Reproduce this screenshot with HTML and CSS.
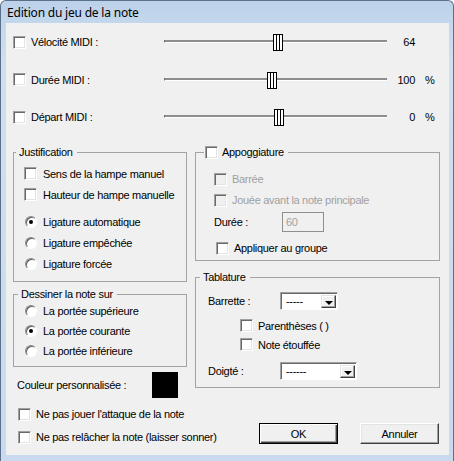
FILE: index.html
```html
<!DOCTYPE html>
<html>
<head>
  <title>Edition du jeu de la note</title>
  <meta charset="UTF-8">
  <link rel="stylesheet" href="styles.css">
</head>
<body>
  <div class="window">
    <div class="titlebar">Edition du jeu de la note</div>
    <div class="client">

      <div class="midi-rows">
        <div class="midi-row">
          <span class="check"></span>
          <span class="midi-label">Vélocité MIDI :</span>
          <div class="slider"><div class="track"></div><div class="thumb" style="left: 109px;"></div></div>
          <span class="midi-value">64</span>
          <span class="midi-unit"></span>
        </div>
        <div class="midi-row">
          <span class="check"></span>
          <span class="midi-label">Durée MIDI :</span>
          <div class="slider"><div class="track"></div><div class="thumb" style="left: 103px;"></div></div>
          <span class="midi-value">100</span>
          <span class="midi-unit">%</span>
        </div>
        <div class="midi-row">
          <span class="check"></span>
          <span class="midi-label">Départ MIDI :</span>
          <div class="slider"><div class="track"></div><div class="thumb" style="left: 110px;"></div></div>
          <span class="midi-value">0</span>
          <span class="midi-unit">%</span>
        </div>
      </div>

      <div class="columns">
        <div class="col-left">
          <fieldset class="group group-justif">
            <legend>Justification</legend>
            <div class="group-body">
              <div class="opt"><span class="check"></span>Sens de la hampe manuel</div>
              <div class="opt"><span class="check"></span>Hauteur de hampe manuelle</div>
              <div class="opt first-radio"><span class="radio checked"></span>Ligature automatique</div>
              <div class="opt"><span class="radio"></span>Ligature empêchée</div>
              <div class="opt"><span class="radio"></span>Ligature forcée</div>
            </div>
          </fieldset>

          <fieldset class="group group-staff">
            <legend>Dessiner la note sur</legend>
            <div class="group-body">
              <div class="opt"><span class="radio"></span>La portée supérieure</div>
              <div class="opt"><span class="radio checked"></span>La portée courante</div>
              <div class="opt"><span class="radio"></span>La portée inférieure</div>
            </div>
          </fieldset>

          <div class="color-row">
            <span class="color-label">Couleur personnalisée :</span>
            <span class="swatch"></span>
          </div>

          <div class="opt bottom-opt"><span class="check"></span>Ne pas jouer l'attaque de la note</div>
          <div class="opt bottom-opt"><span class="check"></span>Ne pas relâcher la note (laisser sonner)</div>
        </div>

        <div class="col-right">
          <fieldset class="group group-appog">
            <legend><span class="check"></span>Appoggiature</legend>
            <div class="group-body">
              <div class="opt disabled"><span class="check"></span>Barrée</div>
              <div class="opt disabled"><span class="check"></span>Jouée avant la note principale</div>
              <div class="field-row">
                <span class="field-label">Durée :</span>
                <span class="input disabled">60</span>
              </div>
              <div class="opt apply-opt"><span class="check"></span>Appliquer au groupe</div>
            </div>
          </fieldset>

          <fieldset class="group group-tab">
            <legend>Tablature</legend>
            <div class="group-body">
              <div class="combo-row">
                <span class="combo-label">Barrette :</span>
                <span class="combo combo-short"><span class="combo-text">-----</span><span class="combo-btn"></span></span>
              </div>
              <div class="tab-checks">
                <div class="opt"><span class="check"></span>Parenthèses ( )</div>
                <div class="opt"><span class="check"></span>Note étouffée</div>
              </div>
              <div class="combo-row doigte-row">
                <span class="combo-label">Doigté :</span>
                <span class="combo combo-long"><span class="combo-text">------</span><span class="combo-btn"></span></span>
              </div>
            </div>
          </fieldset>

          <div class="buttons">
            <button class="btn btn-default">OK</button>
            <button class="btn">Annuler</button>
          </div>
        </div>
      </div>

    </div>
  </div>
</body>
</html>
```

FILE: styles.css
```css
:root {
  --face: #f0f0f0;
  --shadow: #a0a0a0;
  --dark-shadow: #696969;
  --light: #e3e3e3;
  --disabled-text: #a0a0a0;
}

html, body {
  margin: 0;
  padding: 0;
}

body {
  font-family: "Liberation Sans", Arial, sans-serif;
  font-size: 11px;
  letter-spacing: -0.3px;
  color: #000;
}

/* Window frame */
.window {
  width: 454px;
  height: 461px;
  box-sizing: border-box;
  border: 1px solid #5d708a;
  border-bottom: none;
  border-radius: 6px 6px 0 0;
  background: linear-gradient(to bottom, #bcd2ea, #d0dff0 60px, #c9daee);
  padding: 0 4px 6px 5px;
  display: flex;
  flex-direction: column;
}

.titlebar {
  height: 22px;
  box-sizing: border-box;
  padding: 4px 0 0 1px;
  font-family: "Noto Sans", sans-serif;
  font-size: 12px;
  letter-spacing: -0.2px;
  line-height: 16px;
  color: #000;
}

.client {
  flex: 1;
  background: var(--face);
  padding: 9px 9px 0 7px;
}

/* Classic controls */
.check {
  display: inline-block;
  flex-shrink: 0;
  width: 13px;
  height: 13px;
  box-sizing: border-box;
  background: #fff;
  border: 1px solid;
  border-color: var(--shadow) #fff #fff var(--shadow);
  box-shadow: inset 1px 1px 0 var(--dark-shadow), inset -1px -1px 0 var(--light);
}

.radio {
  position: relative;
  display: inline-block;
  flex-shrink: 0;
  width: 12px;
  height: 12px;
  box-sizing: border-box;
  border-radius: 50%;
  background: #fff;
  border: 1px solid;
  border-color: #8a8a8a #fff #fff #8a8a8a;
  box-shadow: inset 1px 1px 0 #5e5e5e;
  margin-left: 1px;
}

.radio.checked::after {
  content: "";
  position: absolute;
  left: 3px;
  top: 3px;
  width: 4px;
  height: 4px;
  border-radius: 50%;
  background: #000;
}

.opt {
  display: flex;
  align-items: center;
  gap: 6px;
  height: 20px;
  white-space: nowrap;
}

.opt.disabled {
  color: var(--disabled-text);
}

.opt.disabled .check {
  background: var(--face);
}

/* MIDI sliders */
.midi-rows {
  display: flex;
  flex-direction: column;
  gap: 17.5px;
}

.midi-row {
  display: grid;
  grid-template-columns: 13px 138px 223px 28px 1fr;
  align-items: center;
  height: 20px;
}

.midi-label {
  padding-left: 5px;
}

.slider {
  position: relative;
  height: 20px;
}

.track {
  margin-top: 8px;
  height: 2px;
  background: #8e8e8e;
  border-bottom: 1px solid #fff;
  border-left: 1px solid #6e6e6e;
}

.thumb {
  position: absolute;
  top: 2px;
  width: 10px;
  height: 15px;
  border-top: 1px solid #000;
  border-bottom: 1px solid #000;
  background: repeating-linear-gradient(to right, #000 0 1px, #fff 1px 3px);
}

.midi-value {
  text-align: right;
}

.midi-unit {
  padding-left: 10px;
}

/* Two columns */
.columns {
  display: grid;
  grid-template-columns: 174px 245px;
  column-gap: 8px;
  margin-top: 19px;
}

.col-left, .col-right {
  display: flex;
  flex-direction: column;
}

/* Group boxes */
.group {
  margin: 0;
  padding: 0;
  min-width: 0;
  border: 1px solid #a3a3a3;
}

.group legend {
  line-height: 13px;
  padding: 0 4px 0 3px;
  margin-left: 2px;
}

.group-justif .group-body {
  padding: 4px 0 7px 10px;
}

.group-justif .opt {
  height: 21px;
}

.group-justif .first-radio {
  margin-top: 6px;
}

.group-staff {
  margin-top: 6px;
}

.group-staff legend {
  margin-left: 4px;
}

.group-staff .group-body {
  padding: 0 0 5px 10px;
}

.group-appog legend {
  display: flex;
  align-items: center;
  gap: 4px;
  margin-left: 8px;
  padding: 0 4px 0 1px;
}

.group-appog .group-body {
  padding: 10px 0 2px 18px;
}

.group-appog .opt {
  gap: 5px;
}

.group-appog .opt + .opt {
  margin-top: 1px;
}

.field-row {
  display: flex;
  align-items: center;
  height: 21px;
  margin-top: 1px;
}

.field-label {
  width: 68px;
}

.input {
  width: 42px;
  height: 20px;
  box-sizing: border-box;
  border: 1px solid #8f8f8f;
  padding-left: 3px;
  line-height: 18px;
}

.input.disabled {
  color: var(--disabled-text);
  background: var(--face);
}

.apply-opt {
  margin-top: 6px;
  margin-left: 2px;
}

.group-tab {
  margin-top: 10px;
}

.group-tab legend {
  margin-left: 4px;
}

.group-tab .group-body {
  padding: 8px 0 7px 12px;
}

.combo-row {
  display: flex;
  align-items: center;
  height: 18px;
}

.combo-label {
  width: 72px;
}

.doigte-row {
  margin-top: 8px;
}

.combo {
  display: flex;
  height: 18px;
  box-sizing: border-box;
  background: #fff;
  border: 1px solid;
  border-color: var(--shadow) #fff #fff var(--shadow);
  box-shadow: inset 1px 1px 0 var(--dark-shadow);
  padding: 2px 1px 1px 2px;
}

.combo-short {
  width: 58px;
}

.combo-long {
  width: 77px;
}

.combo-text {
  flex: 1;
  padding-left: 3px;
  line-height: 13px;
}

.combo-btn {
  position: relative;
  width: 15px;
  box-sizing: border-box;
  background: var(--face);
  border: 1px solid;
  border-color: var(--light) #404040 #404040 var(--light);
  box-shadow: inset -1px -1px 0 var(--shadow), inset 1px 1px 0 #fff;
}

.combo-btn::after {
  content: "";
  position: absolute;
  left: 3px;
  top: 5px;
  border-left: 4px solid transparent;
  border-right: 4px solid transparent;
  border-top: 4px solid #000;
}

.tab-checks {
  margin: 6px 0 0 32px;
}

.tab-checks .opt {
  height: 19px;
  gap: 5px;
}

/* Bottom of left column */
.color-row {
  display: flex;
  align-items: center;
  height: 26px;
  margin-top: 5px;
  padding-left: 4px;
}

.color-label {
  width: 135px;
}

.swatch {
  width: 26px;
  height: 26px;
  background: #000;
}

.bottom-opt {
  padding-left: 5px;
  gap: 5px;
  margin-top: 3px;
}

.color-row + .bottom-opt {
  margin-top: 6px;
}

/* Buttons */
.buttons {
  display: flex;
  justify-content: flex-end;
  gap: 22px;
  margin-top: 35px;
  padding-right: 1px;
}

.btn {
  width: 79px;
  height: 21px;
  box-sizing: border-box;
  font-family: "Liberation Sans", Arial, sans-serif;
  font-size: 11px;
  letter-spacing: -0.3px;
  color: #000;
  background: var(--face);
  border: 1px solid;
  border-color: #fff #404040 #404040 #fff;
  box-shadow: inset -1px -1px 0 var(--shadow), inset 1px 1px 0 var(--light);
  padding: 0;
}

.btn-default {
  border: 1px solid #000;
  box-shadow: inset 1px 1px 0 #fff, inset -1px -1px 0 #404040, inset -2px -2px 0 var(--shadow);
}
```
